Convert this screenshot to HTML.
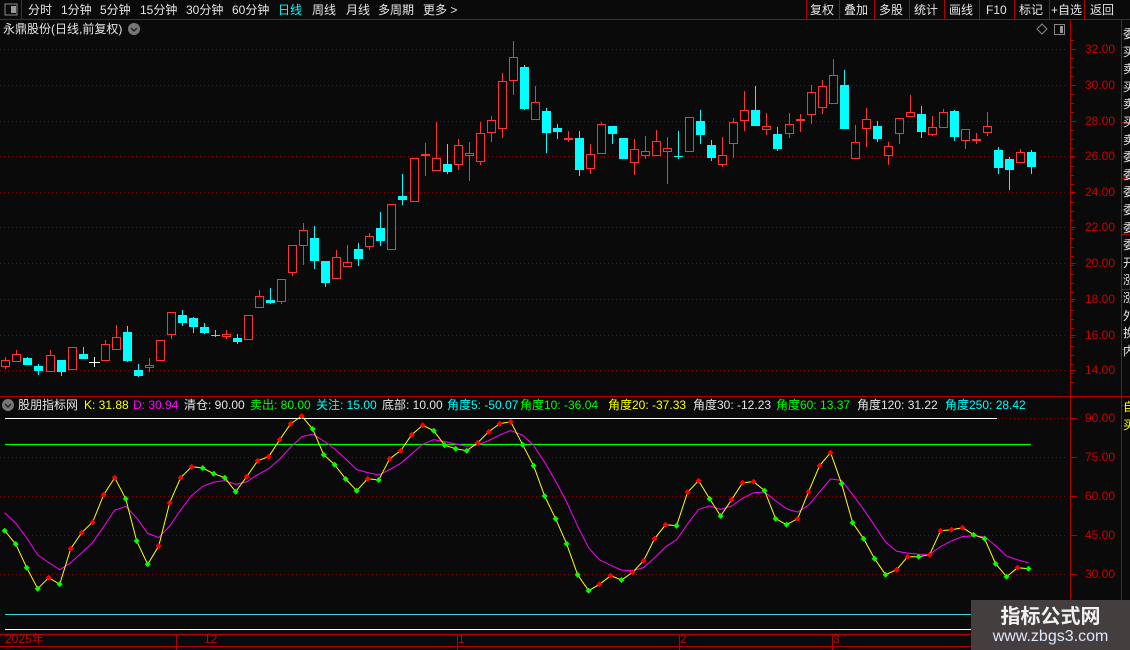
<!DOCTYPE html>
<html><head><meta charset="utf-8"><style>
html,body{margin:0;padding:0;background:#0a0a0a;width:1130px;height:650px;overflow:hidden;font-family:"Liberation Sans","WenQuanYi Zen Hei","Noto Sans CJK SC",sans-serif;}
.t{position:absolute;font-size:12px;line-height:14px;white-space:nowrap;color:#e6e6e6}
#wm{position:absolute;left:971px;top:600px;width:159px;height:50px;background:#453e3e;text-align:center}
</style></head><body>
<svg id="s" width="1130" height="650" style="position:absolute;left:0;top:0" xmlns="http://www.w3.org/2000/svg"></svg>

<div class="t" style="left:28px;top:3px">分时</div>
<div class="t" style="left:61px;top:3px">1分钟</div>
<div class="t" style="left:100px;top:3px">5分钟</div>
<div class="t" style="left:140px;top:3px">15分钟</div>
<div class="t" style="left:186px;top:3px">30分钟</div>
<div class="t" style="left:232px;top:3px">60分钟</div>
<div class="t" style="left:278px;top:3px;color:#00ffff">日线</div>
<div class="t" style="left:312px;top:3px">周线</div>
<div class="t" style="left:346px;top:3px">月线</div>
<div class="t" style="left:378px;top:3px">多周期</div>
<div class="t" style="left:423px;top:3px">更多 &gt;</div>

<div class="t" style="left:810px;top:3px">复权</div>
<div class="t" style="left:844px;top:3px">叠加</div>
<div class="t" style="left:879px;top:3px">多股</div>
<div class="t" style="left:914px;top:3px">统计</div>
<div class="t" style="left:949px;top:3px">画线</div>
<div class="t" style="left:986px;top:3px">F10</div>
<div class="t" style="left:1019px;top:3px">标记</div>
<div class="t" style="left:1051px;top:3px">+自选</div>
<div class="t" style="left:1090px;top:3px">返回</div>

<div class="t" style="left:3px;top:22px">永鼎股份(日线,前复权)</div>

<div class="t" style="left:1085px;top:42px;color:#cc0000">32.00</div>
<div class="t" style="left:1085px;top:78px;color:#cc0000">30.00</div>
<div class="t" style="left:1085px;top:114px;color:#cc0000">28.00</div>
<div class="t" style="left:1085px;top:149px;color:#cc0000">26.00</div>
<div class="t" style="left:1085px;top:185px;color:#cc0000">24.00</div>
<div class="t" style="left:1085px;top:220px;color:#cc0000">22.00</div>
<div class="t" style="left:1085px;top:256px;color:#cc0000">20.00</div>
<div class="t" style="left:1085px;top:292px;color:#cc0000">18.00</div>
<div class="t" style="left:1085px;top:328px;color:#cc0000">16.00</div>
<div class="t" style="left:1085px;top:363px;color:#cc0000">14.00</div>

<div class="t" style="left:1085px;top:411px;color:#cc0000">90.00</div>
<div class="t" style="left:1085px;top:450px;color:#cc0000">75.00</div>
<div class="t" style="left:1085px;top:489px;color:#cc0000">60.00</div>
<div class="t" style="left:1085px;top:528px;color:#cc0000">45.00</div>
<div class="t" style="left:1085px;top:567px;color:#cc0000">30.00</div>

<div class="t" style="left:1123px;top:26px;width:7px;overflow:hidden;line-height:17.6px;white-space:normal;word-break:break-all">委买卖买卖买卖委委委委委委开涨涨外换内</div>
<div class="t" style="left:1123px;top:398px;width:7px;overflow:hidden;color:#ffff00;line-height:18px;white-space:normal">自买</div>

<div class="t" style="left:18px;top:398px">股朋指标网</div>
<div class="t" style="left:84px;top:398px;color:#ffff00">K: 31.88</div>
<div class="t" style="left:133px;top:398px;color:#ff00ff">D: 30.94</div>
<div class="t" style="left:184px;top:398px">清仓: 90.00</div>
<div class="t" style="left:250px;top:398px;color:#00ff00">卖出: 80.00</div>
<div class="t" style="left:316px;top:398px;color:#00ffff">关注: 15.00</div>
<div class="t" style="left:382px;top:398px">底部: 10.00</div>
<div class="t" style="left:447px;top:398px;color:#00ffff">角度5: -50.07</div>
<div class="t" style="left:520px;top:398px;color:#00ff00">角度10: -36.04</div>
<div class="t" style="left:608px;top:398px;color:#ffff00">角度20: -37.33</div>
<div class="t" style="left:693px;top:398px">角度30: -12.23</div>
<div class="t" style="left:776px;top:398px;color:#00ff00">角度60: 13.37</div>
<div class="t" style="left:857px;top:398px">角度120: 31.22</div>
<div class="t" style="left:945px;top:398px;color:#00ffff">角度250: 28.42</div>

<div class="t" style="left:5px;top:632px;color:#cc0000">2025年</div>
<div class="t" style="left:204px;top:632px;color:#cc0000">12</div>
<div class="t" style="left:458px;top:632px;color:#cc0000">1</div>
<div class="t" style="left:680px;top:632px;color:#cc0000">2</div>
<div class="t" style="left:833px;top:632px;color:#cc0000">3</div>

<div id="wm">
<div style="font-size:20px;font-weight:bold;color:#f2f2f2;line-height:24px;margin-top:3px;font-family:'WenQuanYi Zen Hei','Noto Sans CJK SC',sans-serif">指标公式网</div>
<div style="font-size:16px;color:#dde8ff;line-height:20px;font-family:'Liberation Sans',sans-serif">www.zbgs3.com</div>
</div>

<script>
var s=document.getElementById('s'),h='';
function L(x1,y1,x2,y2,c,w,d){h+='<line x1="'+x1+'" y1="'+y1+'" x2="'+x2+'" y2="'+y2+'" stroke="'+c+'" stroke-width="'+(w||1)+'"'+(d?' stroke-dasharray="'+d+'"':'')+'/>';}
function R(x,y,w,hh,f,st){h+='<rect x="'+x+'" y="'+y+'" width="'+w+'" height="'+hh+'" fill="'+f+'"'+(st?' stroke="'+st+'"':'')+'/>';}
var red='#b00000';
L(0,19.5,1130,19.5,red);L(21.5,0,21.5,19,red);
R(5,4,12,11,'none','#888');R(11,6,5,7,'#999');
[806,839,874,909,944,979,1014,1049,1084].forEach(function(x){L(x+.5,0,x+.5,19,red);});
h+='<circle cx="134" cy="29" r="6" fill="#777"/><path d="M131 28 l3 3 l3 -3" stroke="#222" stroke-width="1.5" fill="none"/>';
h+='<path d="M1042 24 l5 5 l-5 5 l-5 -5z" stroke="#888" fill="none"/>';R(1054.5,24.5,10,10,'none','#888');R(1060,26,3,7,'#999');
L(1070.5,20,1070.5,650,red);L(1121.5,20,1121.5,650,red);
[47,122,178,234,289,349,405].forEach(function(y){L(1122,y+.5,1130,y+.5,red);});
[49,85,121,156,192,227,263,299,335,370].forEach(function(y){L(0,y+.5,1068,y+.5,'#800000',1,'1 3');L(1070,y+.5,1076,y+.5,red);});
for(var y=40;y<390;y+=9)L(1070,y+.5,1074,y+.5,red);
L(0,396.5,1130,396.5,red);
h+='<circle cx="8" cy="405" r="6" fill="#777"/><path d="M5 404 l3 3 l3 -3" stroke="#222" stroke-width="1.5" fill="none"/>';
var C=[
['r',360,367,357,369],['r',354,362,350,362],['c',358,365,357,365],['c',366,371,364,375],['r',355,372,350,372],['c',360,372,360,376],['r',347,370,347,370],['c',354,359,347,359],['w',362,362,357,367],['r',344,361,340,361],
['r',337,350,325,350],['c',332,361,326,362],['c',370,376,364,377],['r',365,368,358,372],['r',340,361,340,361],['r',312,335,312,339],['c',315,323,310,326],['c',318,327,317,333],['c',327,333,323,334],['c',335,335,330,337],
['r',334,337,330,339],['c',338,342,334,344],['r',315,340,315,340],['r',296,308,290,308],['c',300,303,288,304],['r',279,302,279,304],['r',245,273,245,276],['r',230,246,223,265],['c',238,261,226,269],['c',261,283,261,287],
['r',257,279,250,279],['r',262,267,245,267],['c',249,259,243,266],['r',236,247,233,250],['c',228,241,212,246],['r',204,250,204,250],['c',196,200,174,205],['r',158,202,158,202],['r',154,156,143,176],['r',158,171,122,171],
['c',164,172,144,174],['r',145,165,139,170],['r',153,156,142,181],['r',133,162,122,165],['r',120,133,116,142],['r',81,129,73,138],['r',57,81,41,95],['c',67,109,65,110],['r',102,120,86,120],['c',111,133,108,153],
['c',128,132,124,139],['r',138,138,131,142],['c',138,170,131,176],['r',154,169,144,174],['r',124,154,122,154],['c',126,134,126,144],['c',138,159,138,159],['r',149,163,139,175],['r',151,156,136,159],['r',141,156,130,156],
['r',148,152,137,184],['c',156,156,131,159],['r',117,152,117,152],['c',121,135,110,144],['c',145,158,140,161],['r',155,165,137,167],['r',122,144,118,158],['r',110,121,91,131],['c',110,126,86,126],['r',126,130,113,135],
['c',134,149,127,151],['r',124,134,113,138],['r',119,121,114,132],['r',92,115,85,124],['r',86,108,80,114],['r',75,104,59,104],['c',85,129,70,129],['r',142,159,125,159],['r',119,129,108,147],['c',126,139,121,142],
['r',146,156,142,165],['r',118,134,118,144],['r',112,117,95,117],['c',114,132,106,138],['r',127,135,116,136],['r',112,128,109,128],['c',111,137,110,141],['r',129,141,129,149],['r',139,141,133,144],['r',126,133,112,136],
['c',150,168,147,174],['c',159,170,157,190],['r',152,163,149,163],['c',152,167,150,174]];
C.forEach(function(k,n){var x=Math.round(5.4+11.03*n);var col=k[0]=='r'?'#ff3232':(k[0]=='c'?'#00ffff':'#ffffff');
 L(x+.5,k[3],x+.5,k[4],col);
 var hh=k[2]-k[1];
 if(k[0]=='r'){ if(hh<2)R(x-4,k[1],9,2,col);else R(x-3.5,k[1]+.5,8,hh-1,'#0a0a0a',col);}
 else if(k[0]=='c'){R(x-4,k[1],9,Math.max(hh,1),col);}
 else {L(x-5,k[1]+.5,x+6,k[1]+.5,col);}
});
[457,496,535,574].forEach(function(y){L(0,y+.5,1068,y+.5,'#800000',1,'1 3');});
[418,457,496,535,574].forEach(function(y){L(1070,y+.5,1077,y+.5,red);});
L(5,418.5,997,418.5,'#ffffff');L(998,418.5,1068,418.5,'#800000',1,'1 3');
L(5,444.5,1031,444.5,'#00ff00',1.3);
L(5,614.5,1068,614.5,'#40d0d8');L(5,629.5,1068,629.5,'#ffffff');
L(0,634.5,1070,634.5,red,1.5);
[176,457,679,832].forEach(function(x){L(x+.5,634,x+.5,650,red);});
L(0,646.5,1130,646.5,red);
var K=[362,402,473,536,503,523,416,368,336,254,203,266,393,463,408,278,203,170,174,191,203,245,200,152,140,89,41,18,57,134,164,207,242,206,210,146,122,74,46,62,106,116,122,98,65,41,35,
104,167,258,326,401,494,542,523,497,510,487,452,386,344,347,247,212,266,318,269,218,215,242,326,344,326,245,167,128,221,338,386,446,494,479,440,440,434,362,359,353,374,386,461,500,473,476];
var G=[0,1,2,3,5,11,12,13,18,19,20,21,28,29,30,31,32,34,39,40,41,42,47,48,49,50,51,52,53,56,61,64,65,69,70,71,76,77,78,79,80,83,88,89,90,91,93];
var pk='',pd='',D=512.7,pts=[];
K.forEach(function(v,n){var x=4.7+11*n+(n>=47?0.9:0);var y=410+v/3;pts.push([x,y]);pk+=(n?'L':'M')+x.toFixed(1)+' '+y.toFixed(1);
 D=n?(2*D+y)/3:D;pd+=(n?'L':'M')+x.toFixed(1)+' '+D.toFixed(1);});
h+='<path d="'+pd+'" stroke="#ff00ff" fill="none" stroke-width="1"/>';
h+='<path d="'+pk+'" stroke="#ffff00" fill="none" stroke-width="1"/>';
pts.forEach(function(p,n){var c=G.indexOf(n)>=0?'#00ff00':'#ff0000';
 h+='<path d="M'+p[0].toFixed(1)+' '+(p[1]-3).toFixed(1)+'l3 3l-3 3l-3 -3z" fill="'+c+'"/>';});
s.innerHTML=h;
</script>
</body></html>
